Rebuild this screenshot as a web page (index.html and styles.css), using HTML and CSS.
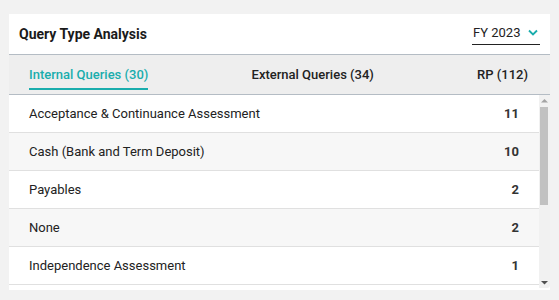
FILE: index.html
```html
<!DOCTYPE html>
<html lang="en">
<head>
    <meta charset="UTF-8">
    <meta name="viewport" content="width=device-width, initial-scale=1.0">
    <title>Query Type Analysis</title>
    <link rel="stylesheet" href="styles.css">
</head>
<body>
    <div class="card">
        <div class="card-header">
            <h2>Query Type Analysis</h2>
            <div class="year-select">
                <span>FY 2023</span>
                <svg width="10" height="7" viewBox="0 0 10 7">
                    <path d="M1 1.5 L5 5.5 L9 1.5" fill="none" stroke="#1aadad" stroke-width="1.8"/>
                </svg>
            </div>
        </div>

        <div class="tabs">
            <div class="tab active">Internal Queries (30)</div>
            <div class="tab">External Queries (34)</div>
            <div class="tab">RP (112)</div>
        </div>

        <div class="list-wrap">
            <div class="query-list">
                <div class="query-row"><span>Acceptance &amp; Continuance Assessment</span><strong>11</strong></div>
                <div class="query-row"><span>Cash (Bank and Term Deposit)</span><strong>10</strong></div>
                <div class="query-row"><span>Payables</span><strong>2</strong></div>
                <div class="query-row"><span>None</span><strong>2</strong></div>
                <div class="query-row"><span>Independence Assessment</span><strong>1</strong></div>
            </div>
            <div class="scrollbar">
                <svg class="arrow" width="11" height="12" viewBox="0 0 11 12">
                    <path d="M2 7.5 L5.5 4 L9 7.5 Z" fill="#a3a3a3"/>
                </svg>
                <div class="track">
                    <div class="thumb"></div>
                </div>
                <svg class="arrow" width="11" height="12" viewBox="0 0 11 12">
                    <path d="M2 5 L5.5 8.5 L9 5 Z" fill="#505050"/>
                </svg>
            </div>
        </div>
    </div>
</body>
</html>
```

FILE: styles.css
```css
body {
    font-family: Roboto, 'Liberation Sans', sans-serif;
    background-color: #f2f2f2;
    margin: 14px 9px;
    color: #222;
}
.card {
    background: white;
    box-shadow: 0 1px 5px rgba(0,0,0,0.12);
    padding-bottom: 2px;
}
.card-header {
    display: flex;
    justify-content: space-between;
    align-items: center;
    height: 40px;
    padding: 0 10px;
    border-bottom: 1px solid #b4bcc4;
}
.card-header h2 {
    margin: 0;
    font-size: 14px;
    font-weight: 700;
    color: #1a1a1a;
}
.year-select {
    display: flex;
    align-items: center;
    justify-content: space-between;
    width: 68px;
    padding: 0 2px 4px 1px;
    margin-top: 2px;
    border-bottom: 1px solid #222;
    font-size: 13px;
    white-space: nowrap;
    box-sizing: border-box;
}
.tabs {
    display: flex;
    justify-content: space-between;
    height: 39px;
    padding: 0 22px 0 20px;
    background-color: #eeeeee;
    border-bottom: 1px solid #b4bcc4;
}
.tab {
    display: flex;
    align-items: center;
    font-size: 13px;
    font-weight: 500;
    color: #222;
    border-bottom: 2px solid transparent;
    margin-bottom: 4px;
    padding-top: 6px;
}
.tab.active {
    color: #1aadad;
    border-bottom-color: #1aadad;
}
.list-wrap {
    display: flex;
    height: 193px;
}
.query-list {
    flex: 1;
}
.query-row {
    display: flex;
    justify-content: space-between;
    align-items: center;
    height: 37px;
    padding: 0 20px;
    border-bottom: 1px solid #e0e0e0;
    font-size: 13px;
    color: #222;
}
.query-row:nth-child(even) {
    background-color: #f7f7f7;
}
.query-row strong {
    font-weight: 700;
    color: #333;
}
.scrollbar {
    display: flex;
    flex-direction: column;
    width: 11px;
    background-color: #f1f1f1;
    border-bottom-right-radius: 3px;
}
.arrow {
    display: block;
}
.track {
    flex: 1;
}
.thumb {
    width: 8px;
    height: 98px;
    margin-left: 1px;
    background-color: #c1c1c1;
}
```
